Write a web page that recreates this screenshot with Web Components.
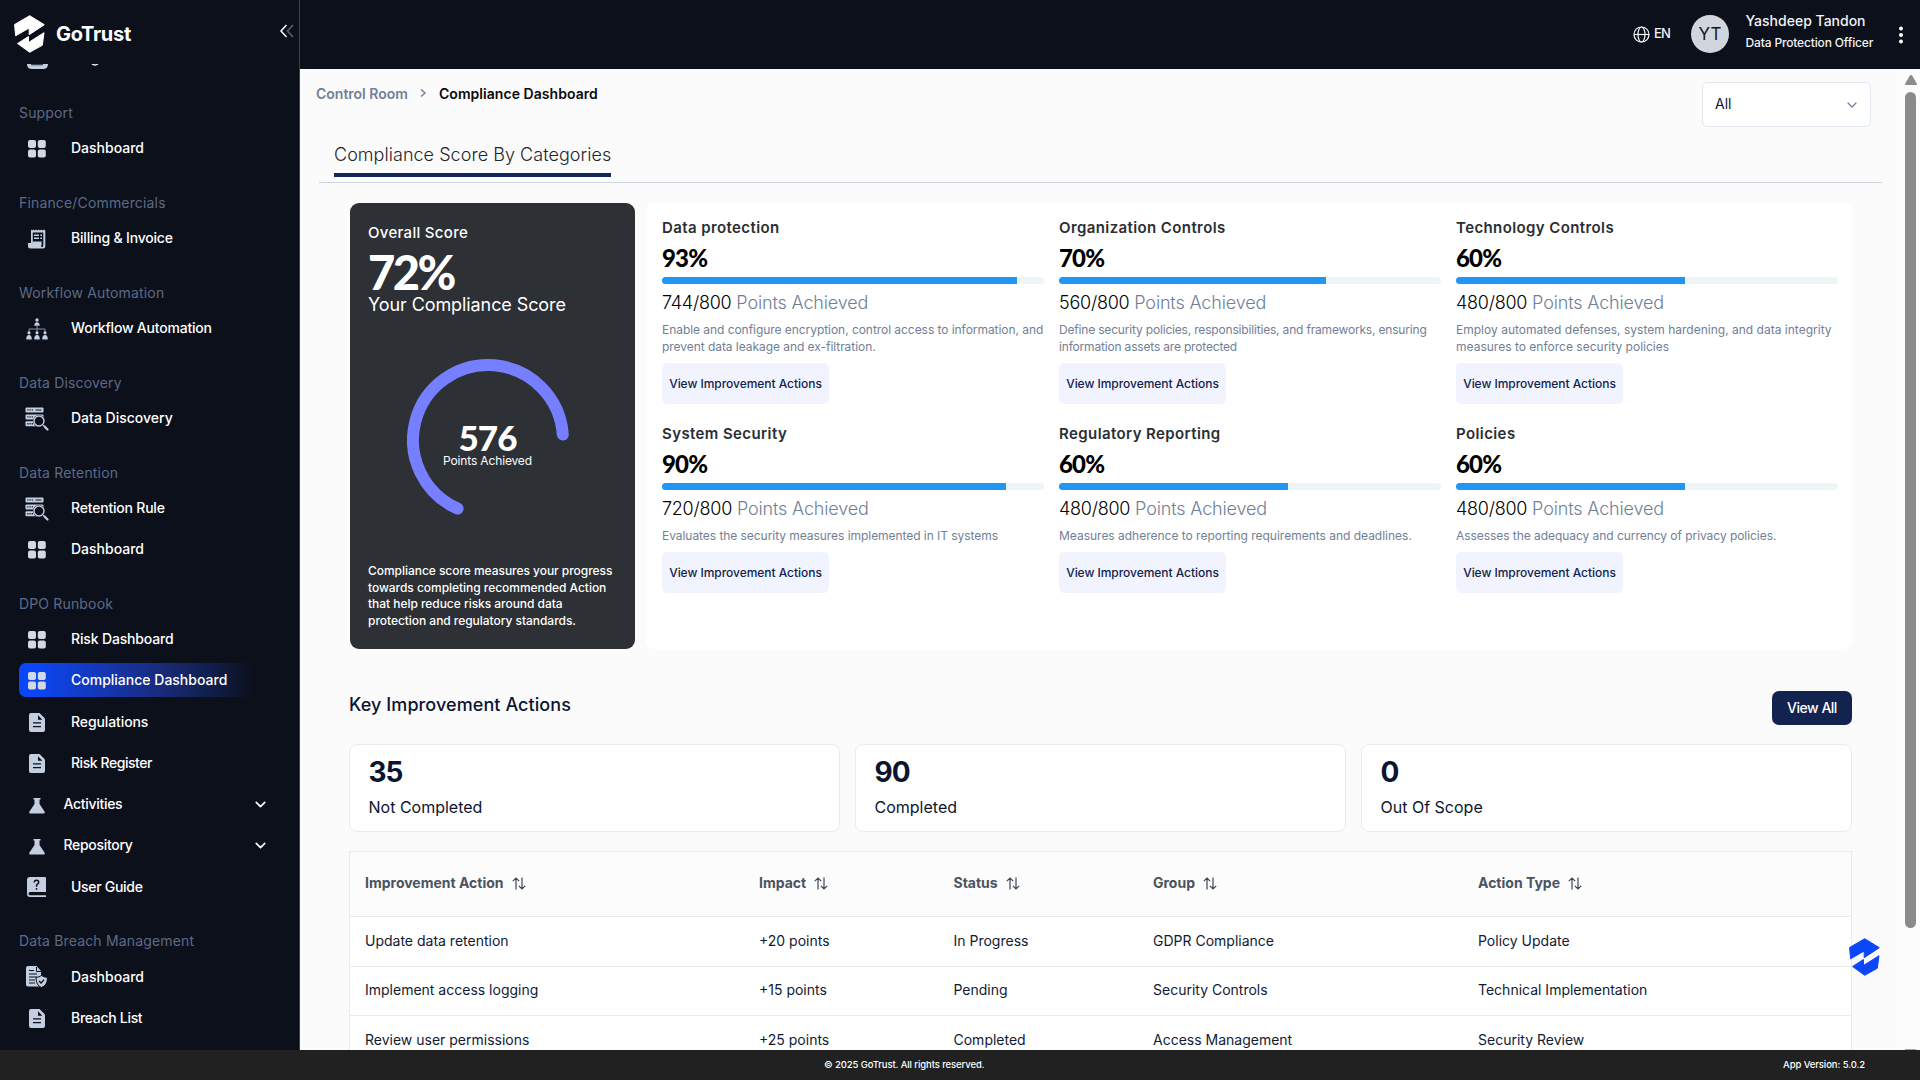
<!DOCTYPE html>
<html lang="en">
<head>
<meta charset="utf-8">
<title>GoTrust - Compliance Dashboard</title>
<style>
    html, body {
        margin: 0;
        height: 100%;
        overflow: hidden;
    }
    body {
        font-family: Inter, "Open Sans", sans-serif;
        font-size: 14px;
        color: #0f172a;
        --navy: #0c101b;
        --blue: #0b47f9;
        --line: #ebebeb;
        --muted: #718096;
    }
</style>
</head>
<body>
<app-shell>
    <side-bar slot="side">
        <nav-group label="Support">
            <nav-item icon="grid">Dashboard</nav-item>
        </nav-group>
        <nav-group label="Finance/Commercials">
            <nav-item icon="invoice" style="letter-spacing:-.2px">Billing &amp; Invoice</nav-item>
        </nav-group>
        <nav-group label="Workflow Automation">
            <nav-item icon="flow" style="letter-spacing:-.2px">Workflow Automation</nav-item>
        </nav-group>
        <nav-group label="Data Discovery">
            <nav-item icon="search">Data Discovery</nav-item>
        </nav-group>
        <nav-group label="Data Retention">
            <nav-item icon="search" style="letter-spacing:-.2px">Retention Rule</nav-item>
            <nav-item icon="grid">Dashboard</nav-item>
        </nav-group>
        <nav-group label="DPO Runbook">
            <nav-item icon="grid" style="letter-spacing:-.15px">Risk Dashboard</nav-item>
            <nav-item icon="grid" active>Compliance Dashboard</nav-item>
            <nav-item icon="doc" style="letter-spacing:-.1px">Regulations</nav-item>
            <nav-item icon="doc" style="letter-spacing:-.45px">Risk Register</nav-item>
            <nav-item icon="flask" expandable style="letter-spacing:-.3px">Activities</nav-item>
            <nav-item icon="flask" expandable style="letter-spacing:-.3px">Repository</nav-item>
            <nav-item icon="guide" style="letter-spacing:-.3px">User Guide</nav-item>
        </nav-group>
        <nav-group label="Data Breach Management">
            <nav-item icon="shield">Dashboard</nav-item>
            <nav-item icon="doc" style="letter-spacing:-.3px">Breach List</nav-item>
        </nav-group>
    </side-bar>
    <top-bar slot="top" name="Yashdeep Tandon" role-name="Data Protection Officer" initials="YT" lang-code="EN"></top-bar>

    <page-head></page-head>
    <section-tab>Compliance Score By Categories</section-tab>
    <score-board>
        <overall-score slot="overall"></overall-score>
        <score-item name="Data protection" percent="93" points="744">Enable and configure encryption, control access to information, and prevent data leakage and ex-filtration.</score-item>
        <score-item name="Organization Controls" percent="70" points="560" style="--desc-spacing:-.18px">Define security policies, responsibilities, and frameworks, ensuring information assets are protected</score-item>
        <score-item name="Technology Controls" percent="60" points="480" style="--desc-spacing:.01px">Employ automated defenses, system hardening, and data integrity measures to enforce security policies</score-item>
        <score-item name="System Security" percent="90" points="720">Evaluates the security measures implemented in IT systems</score-item>
        <score-item name="Regulatory Reporting" percent="60" points="480" style="--desc-spacing:-.01px">Measures adherence to reporting requirements and deadlines.</score-item>
        <score-item name="Policies" percent="60" points="480">Assesses the adequacy and currency of privacy policies.</score-item>
    </score-board>
    <key-actions>
        <stat-card value="35">Not Completed</stat-card>
        <stat-card value="90">Completed</stat-card>
        <stat-card value="0">Out Of Scope</stat-card>
    </key-actions>
    <action-table></action-table>

    <page-scrollbar slot="scroll"></page-scrollbar>
    <brand-mark slot="float"></brand-mark>
    <page-footer slot="footer"></page-footer>
</app-shell>

<script>
const ICONS = {
    grid: `<svg width="18" height="18" viewBox="0 0 18 18" fill="#d3d9e3"><rect width="8" height="8" rx="2"/><rect x="9.8" width="8" height="8" rx="2"/><rect y="9.6" width="8" height="8" rx="2"/><rect x="9.8" y="9.6" width="8" height="8" rx="2"/></svg>`,
    invoice: `<svg width="18" height="20" viewBox="0 0 18 20"><path fill="#c3cfe1" d="M3 .5l1.2 1 1.3-1 1.3 1 1.3-1 1.3 1 1.3-1 1.3 1 1.3-1 1.3 1 1.4-1 1.3 1V17q0 2.5-2.5 2.5H2.5Q0 19.500 0 17v-3h3z"/><path fill="#0c101b" d="M4.800 3.500h10.500V16.500q0 1.500-1.200 1.500T13 16.500V14H4.800z"/><g fill="#c3cfe1"><path d="M6 5.500h5V7H6zM6 8.500h5V10H6zM12.300 5.500H14V7h-1.700zM12.300 8.500H14V10h-1.700z"/><path d="M4.800 12.500h8.800v4H4.800z"/></g></svg>`,
    flow: `<svg width="22" height="22" viewBox="0 0 22 22" fill="#c3cfe1"><circle cx="11" cy="2" r="1.700"/><path d="M8.300 7.800q0-3.600 2.700-3.600t2.700 3.600z"/><path fill="none" stroke="#8792a8" stroke-width="1" d="M11 8v6M3 14v-3h16v3"/><circle cx="3" cy="14.800" r="1.600"/><circle cx="11" cy="14.800" r="1.600"/><circle cx="19" cy="14.800" r="1.600"/><path d="M.3 21.500q-.3-4.500 2.700-4.500t2.700 4.500zM8.300 21.500Q8 17 11 17t2.700 4.500zM16.300 21.500Q16 17 19 17t2.700 4.500z"/></svg>`,
    search: `<svg width="24" height="24" viewBox="0 0 24 24"><g fill="#c3cfe1"><rect x=".5" y=".5" width="18" height="5" rx="1"/><rect x=".5" y="7.500" width="18" height="5" rx="1"/><rect x=".5" y="14.300" width="13" height="5" rx="1"/></g><g fill="#0c101b"><path d="M2.300 2.300h1.200v1.300H2.300zM4.500 2.300h1.200v1.300H4.500zM6.700 2.300h1.200v1.300H6.700zM10.500 2.500h6v.9h-6zM2.300 9.300h1.200v1.300H2.300zM4.500 9.300h1.200v1.300H4.500zM6.700 9.300h1.200v1.300H6.700zM2.300 16.100h1.200v1.300H2.300zM4.500 16.100h1.200v1.300H4.500zM6.700 16.100h1.200v1.300H6.700z"/></g><circle cx="14" cy="14" r="6" fill="#0c101b"/><circle cx="14" cy="14" r="5" fill="#0c101b" stroke="#c3cfe1" stroke-width="1.400"/><path stroke="#c3cfe1" stroke-width="2.200" stroke-linecap="round" d="M19.500 19.500l3 3"/><path stroke="#c3cfe1" stroke-width="1" d="M17.500 17.500l2 2"/></svg>`,
    doc: `<svg width="16" height="19" viewBox="0 0 16 19"><path fill="#c3cfe1" d="M2 0h8.500L16 5.500V17q0 2-2 2H2q-2 0-2-2V2q0-2 2-2z"/><path fill="#0c101b" d="M9 2.300V6.700h4.400zM4 9.300h8v1.300H4zM4 13h8v1.300H4z"/></svg>`,
    flask: `<svg style="margin-top:2px" width="16" height="16" viewBox="0 0 16 16" fill="#c3cfe1"><path d="M4.500 0h7v1.500h-1V6l5 7.500q1 2-1 2H1.500q-2 0-1-2L5.500 6V1.500h-1z"/></svg>`,
    guide: `<svg width="20" height="21" viewBox="0 0 20 21"><path fill="#c3cfe1" d="M3 0h15q1 0 1 1v14H3q-1.500 0-1.500 1.600T3 18.200h16V20H3q-3 0-3-3V3q0-3 3-3z"/><path fill="none" stroke="#0c101b" stroke-width="1.500" d="M7.300 5.500Q7.300 3.300 9.500 3.300t2.200 2q0 1.300-1.200 1.900T9.500 9v.8M9.500 11v1.700"/></svg>`,
    shield: `<svg width="22" height="22" viewBox="0 0 22 22"><path fill="#c3cfe1" d="M2 0h8.500L15 5v15.500H2q-2 0-2-2V2q0-2 2-2z"/><path fill="none" stroke="#0c101b" d="M10.500 1v4.500H15M3 4.500h5M3 8h8M3 11h8M3 14h6M3 17h6"/><path fill="#c3cfe1" stroke="#0c101b" d="M15.500 9.500q2.500 1.700 6 2 0 8-6 10-5.500-2-5.500-10 3-.3 5.500-2z"/><path fill="none" stroke="#0c101b" stroke-width="1.300" d="M13 15l2 2 3-3.200"/></svg>`
};
const chevron = (size, width) => `<svg width="${size}" height="${size}" viewBox="0 0 24 24" fill="none" stroke="currentColor" stroke-width="${width}" stroke-linecap="round" stroke-linejoin="round"><path d="M6 9l6 6 6-6"/></svg>`;

class BaseElement extends HTMLElement {
    constructor() {
        super();
        this.attachShadow({ mode: "open" });
    }
    connectedCallback() {
        const template = document.createElement("template");
        template.innerHTML = `<style>${this.getStyle()}</style>${this.getTemplate()}`;
        this.shadowRoot.appendChild(template.content);
    }
}

class AppShell extends BaseElement {
    getStyle() {
        return `
            :host { display: grid; grid-template: 69px 1fr 30px / 300px 1fr; width: 100vw; height: 100vh; position: relative; }
            .side { grid-row: 1 / 3; overflow: hidden; }
            .body { display: flex; overflow: hidden; background: #fbfbfb; }
            main { flex: 1; display: flex; flex-direction: column; min-width: 0; }
            .foot { grid-column: 1 / 3; z-index: 1; }
            .float { position: absolute; left: 1848.500px; top: 937.500px; color: var(--blue); }
        `;
    }
    getTemplate() {
        return `
            <div class="side"><slot name="side"></slot></div>
            <slot name="top"></slot>
            <div class="body">
                <main><slot></slot></main>
                <slot name="scroll"></slot>
            </div>
            <div class="foot"><slot name="footer"></slot></div>
            <div class="float"><slot name="float"></slot></div>
        `;
    }
}

class BrandMark extends BaseElement {
    getStyle() {
        return `:host { display: block; width: 31px; height: 38px; } svg { display: block; }`;
    }
    getTemplate() {
        return `<svg width="31" height="38" viewBox="0 0 31 38" fill="currentColor" stroke="currentColor" stroke-width="1" stroke-linejoin="round">
            <path d="M15.700.7L30.300 9.700 15.200 19.700V13L1.600 20.800.6 9.500z"/>
            <path d="M30 17.700L28.300 30.300 15.700 37.300 3.600 28.500 14.500 21.500V27.500z"/></svg>`;
    }
}

class SideBar extends BaseElement {
    getStyle() {
        return `
            :host { display: flex; flex-direction: column; height: 100%; box-sizing: border-box; background: var(--navy); border-right: 1px solid #3b4150; color: #fff; }
            header { display: flex; align-items: center; height: 64px; flex: none; padding: 0 5px 0 14px; box-sizing: border-box; }
            brand-mark { margin-top: 4px; }
            b { font-size: 20px; font-weight: 700; margin-left: 11px; letter-spacing: -.3px; margin-top: 3px; }
            .collapse { margin: -2px 0 0 auto; }
            nav { flex: 1; overflow: hidden; }
            .rest { display: block; height: 10px; margin-bottom: 28.600px; }
        `;
    }
    getTemplate() {
        return `
            <header>
                <brand-mark></brand-mark><b>GoTrust</b>
                <svg class="collapse" width="15" height="16" viewBox="0 0 15 16" fill="none" stroke-width="1.500"><path stroke="#fff" d="M7.500 2L2 8l5.500 6"/><path stroke="#5d6373" d="M14 2L8.500 8l5.500 6"/></svg>
            </header>
            <nav>
                <svg class="rest" width="120" height="10"><path fill="#c3cfe1" d="M27 0h21q0 5-5 5H32q-5 0-5-5z"/><path fill="#3d4454" d="M31 0h12v1.300H31z"/><path fill="none" stroke="#fff" stroke-width="1.300" d="M92 0q3 2 6 0"/></svg>
                <slot></slot>
            </nav>
        `;
    }
}

class NavGroup extends BaseElement {
    getStyle() {
        return `
            :host { display: flex; flex-direction: column; margin: 0 0 28px 19px; }
            .label { height: 20px; line-height: 20px; color: #5c6a86; letter-spacing: .16px; margin-bottom: 8px; }
            .items { display: flex; flex-direction: column; gap: 7.250px; }
        `;
    }
    getTemplate() {
        return `<div class="label">${this.getAttribute("label")}</div><div class="items"><slot></slot></div>`;
    }
}

class NavItem extends BaseElement {
    getStyle() {
        return `
            :host { display: flex; align-items: center; height: 34px; width: 240px; border-radius: 7px; font-weight: 500; color: #fff; }
            :host([active]) { background: linear-gradient(90deg, #0b47f9 5%, #1a2a78 60%, #10204f 78%, rgba(12,16,27,0) 98%); }
            .icon { width: 37px; display: flex; justify-content: center; margin: 2px 15.500px 0 -.500px; }
            :host([expandable]) .icon { margin-right: 8px; }
            .arrow { margin: 1px -10px 0 auto; display: flex; }
            .text { margin-top: -.500px; }
        `;
    }
    getTemplate() {
        const arrow = this.hasAttribute("expandable") ? `<span class="arrow">${chevron(17, 2.300)}</span>` : "";
        return `<span class="icon">${ICONS[this.getAttribute("icon")]}</span><span class="text"><slot></slot></span>${arrow}`;
    }
}

class TopBar extends BaseElement {
    getStyle() {
        return `
            :host { display: flex; align-items: center; justify-content: flex-end; background: var(--navy); color: #f1f3f6; box-sizing: border-box; padding-right: 16px; font-weight: 500; }
            .lang { display: flex; align-items: center; gap: 4px; margin: -3px 21px 0 0; font-size: 13px; font-weight: 500; letter-spacing: -.8px; }
            .lang svg { margin-top: 2px; }
            .avatar { width: 38px; height: 38px; border-radius: 50%; background: #d1d6dd; color: #14171f; font-size: 17px; font-weight: 400; display: flex; align-items: center; justify-content: center; margin-right: 16.500px; margin-top: -1px; }
            .user { width: 127px; white-space: nowrap; margin-right: 25.500px; margin-top: -6px; }
            .name { line-height: 22px; }
            .role { font-size: 12px; line-height: 21px; letter-spacing: -.15px; }
        `;
    }
    getTemplate() {
        return `
            <div class="lang">
                <svg width="17" height="17" viewBox="0 0 17 17" fill="none" stroke="currentColor" stroke-width="1.200"><circle cx="8.500" cy="8.500" r="7.500"/><ellipse cx="8.500" cy="8.500" rx="3.500" ry="7.500"/><path d="M1 8.500h15"/></svg>
                ${this.getAttribute("lang-code")}
            </div>
            <div class="avatar">${this.getAttribute("initials")}</div>
            <div class="user">
                <div class="name">${this.getAttribute("name")}</div>
                <div class="role">${this.getAttribute("role-name")}</div>
            </div>
            <svg width="6" height="18" viewBox="0 0 6 18" fill="#fff"><circle cx="3" cy="2.500" r="2"/><circle cx="3" cy="9" r="2"/><circle cx="3" cy="15.500" r="2"/></svg>
        `;
    }
}

class PageHead extends BaseElement {
    getStyle() {
        return `
            :host { display: flex; justify-content: space-between; align-items: flex-start; padding: 13px 30px 0 16px; height: 58px; box-sizing: border-box; }
            .crumbs { display: flex; align-items: center; font-weight: 600; height: 22px; color: var(--muted); }
            .crumbs svg { margin: 0 12px 0 11px; }
            .crumbs strong { color: #0a0a0a; font-weight: 600; letter-spacing: .05px; }
            .select { display: flex; align-items: center; justify-content: space-between; width: 169px; height: 45px; box-sizing: border-box; border: 1px solid #e2e8f0; border-radius: 5px; background: #fff; padding: 0 10px 0 12px; }
            .select span { margin-top: -2px; }
            .select svg { color: #718096; }
        `;
    }
    getTemplate() {
        return `
            <div class="crumbs">Control Room
                <svg width="8" height="10" viewBox="0 0 8 10" fill="none" stroke="#718096" stroke-width="1.400"><path d="M2 1.500L6 5 2 8.500"/></svg>
                <strong>Compliance Dashboard</strong>
            </div>
            <div class="select"><span>All</span>${chevron(16, 1.800)}</div>
        `;
    }
}

class SectionTab extends BaseElement {
    getStyle() {
        return `
            :host { display: flex; margin: 8px 19px 0 19px; padding: 0 15px 5px; border-bottom: 1px solid #cdd5df; height: 42px; }
            span { font-size: 18px; font-weight: 300; color: #22262d; border-bottom: 4px solid #13275a; height: 38px; line-height: 39px; box-sizing: content-box; letter-spacing: .04px; }
        `;
    }
    getTemplate() {
        return `<span><slot></slot></span>`;
    }
}

class ScoreBoard extends BaseElement {
    getStyle() {
        return `
            :host { display: flex; gap: 11px; margin: 20px 49px 0 50px; height: 446px; flex: none; }
            .grid { flex: 1; background: #fff; border-radius: 8px; display: grid; grid-template-columns: repeat(3, 382px); grid-template-rows: 206px 206px; column-gap: 15px; padding: 14px 14px 0 16px; }
        `;
    }
    getTemplate() {
        return `<slot name="overall"></slot><div class="grid"><slot></slot></div>`;
    }
}

class OverallScore extends BaseElement {
    getStyle() {
        return `
            :host { display: flex; flex-direction: column; width: 285px; box-sizing: border-box; background: #2d3035; border-radius: 9px; color: #fff; padding: 19px 18px; }
            .title { font-size: 15px; font-weight: 500; line-height: 22px; letter-spacing: .3px; }
            .percent { font-family: Lato, sans-serif; font-size: 47px; font-weight: 900; line-height: 46px; letter-spacing: -2.500px; margin-top: 5px; }
            .caption { font-size: 18px; line-height: 24px; margin-top: -2px; letter-spacing: -.09px; }
            .ring { display: grid; place-items: center; width: 162px; height: 162px; margin: 42px 0 0 38.500px; }
            .ring > * { grid-area: 1 / 1; }
            .ring div.score { text-align: center; padding-top: 12px; }
            .points { font-family: Lato, sans-serif; font-size: 35px; font-weight: 900; line-height: 30px; letter-spacing: -1px; }
            .ring p { margin: 0; font-size: 12px; line-height: 18px; letter-spacing: -.15px; }
            .about { margin: 42px -10px 0 0; font-size: 12px; font-weight: 500; line-height: 16.700px; letter-spacing: -.04px; }
        `;
    }
    getTemplate() {
        return `
            <div class="title">Overall Score</div>
            <div class="percent">72%</div>
            <div class="caption">Your Compliance Score</div>
            <div class="ring">
                <svg width="162" height="162" viewBox="-81 -81 162 162" fill="none" stroke="#767fff" stroke-width="12" stroke-linecap="round"><path d="M-30.400 68.600A75 75 0 1 1 74.800-5.500"/></svg>
                <div class="score"><div class="points">576</div><p>Points Achieved</p></div>
            </div>
            <div class="about">Compliance score measures your progress<br>towards completing recommended Action<br>that help reduce risks around data<br>protection and regulatory standards.</div>
        `;
    }
}

class ScoreItem extends BaseElement {
    getStyle() {
        return `
            :host { display: block; }
            h3 { margin: 0; font-size: 15px; font-weight: 600; line-height: 22px; letter-spacing: .4px; color: #2a2e33; }
            .percent { font-family: Lato, sans-serif; font-size: 24px; font-weight: 900; line-height: 28px; letter-spacing: -.8px; color: #000; margin: 5px 0; }
            .track { height: 7px; border-radius: 4px; background: #eff4f7; overflow: hidden; }
            .bar { height: 100%; background: #2196f3; width: ${this.getAttribute("percent")}%; }
            .points { font-size: 18px; font-weight: 300; line-height: 24px; margin-top: 7px; color: var(--muted); letter-spacing: -.15px; }
            .points span { color: #000; letter-spacing: -.25px; }
            p { margin: 6px -6px 0 0; font-size: 12px; line-height: 17px; color: var(--muted); letter-spacing: var(--desc-spacing, -.05px); }
            button { display: block; margin: 8px 0 0; width: 167px; height: 41px; border: 0; border-radius: 5px; background: #f1f4ff; color: #12224e; font: 500 12px Inter, sans-serif; letter-spacing: -.04px; padding: 0 0 1px; white-space: nowrap; }
        `;
    }
    getTemplate() {
        return `
            <h3>${this.getAttribute("name")}</h3>
            <div class="percent">${this.getAttribute("percent")}%</div>
            <div class="track"><div class="bar"></div></div>
            <div class="points"><span>${this.getAttribute("points")}/800</span> Points Achieved</div>
            <p><slot></slot></p>
            <button>View Improvement Actions</button>
        `;
    }
}

class KeyActions extends BaseElement {
    getStyle() {
        return `
            :host { display: block; margin: 42px 49px 0 49px; flex: none; }
            header { display: flex; justify-content: space-between; height: 34px; }
            h2 { margin: 0; font-size: 18px; font-weight: 500; line-height: 27px; letter-spacing: .08px; color: #0c1530; }
            button { width: 80px; height: 34px; border: 0; border-radius: 7px; background: #13234f; color: #fff; font: 500 14px Inter, sans-serif; letter-spacing: -.5px; padding: 0 0 2px; }
            .cards { display: grid; grid-template-columns: repeat(3, 1fr); gap: 15px; margin-top: 19px; }
        `;
    }
    getTemplate() {
        return `
            <header><h2>Key Improvement Actions</h2><button>View All</button></header>
            <div class="cards"><slot></slot></div>
        `;
    }
}

class StatCard extends BaseElement {
    getStyle() {
        return `
            :host { display: block; box-sizing: border-box; height: 88px; border: 1px solid var(--line); border-radius: 8px; background: #fff; padding: 10px 18.500px; color: #0c1530; }
            .value { font-size: 28px; font-weight: 700; line-height: 34px; letter-spacing: -1px; }
            .label { font-size: 16px; line-height: 24px; margin-top: 6px; }
        `;
    }
    getTemplate() {
        return `<div class="value">${this.getAttribute("value")}</div><div class="label"><slot></slot></div>`;
    }
}

class ActionTable extends BaseElement {
    getStyle() {
        return `
            :host { display: block; margin: 19px 49px 0; border: 1px solid var(--line); flex: none; }
            .row { display: grid; grid-template-columns: 394px 194.500px 199.500px 325px 1fr; align-items: center; height: 48.500px; border-bottom: 1px solid var(--line); padding-left: 15px; background: #fff; color: #111b33; }
            .row span { margin-top: -2px; }
            .row.head { height: 64px; background: #fcfcfc; font-weight: 700; color: #4a5362; }
            .row.head span { display: flex; align-items: center; gap: 8px; margin-top: -4px; }
            svg { margin-top: 3px; }
        `;
    }
    getTemplate() {
        const sort = `<svg width="14" height="13" viewBox="0 0 14 13" fill="none" stroke="#3d4757" stroke-width="1.200"><path d="M4 12.500V1.200M.8 4.200L4 1l3.200 3.200M10 .5v11.300M6.800 8.800L10 12l3.200-3.200"/></svg>`;
        const heads = ["Improvement Action", "Impact", "Status", "Group", "Action Type"];
        const rows = [
            ["Update data retention", "+20 points", "In Progress", "GDPR Compliance", "Policy Update"],
            ["Implement access logging", "+15 points", "Pending", "Security Controls", "Technical Implementation"],
            ["Review user permissions", "+25 points", "Completed", "Access Management", "Security Review"]
        ];
        return `
            <div class="row head">${heads.map(h => `<span>${h}${sort}</span>`).join("")}</div>
            ${rows.map(r => `<div class="row">${r.map(c => `<span>${c}</span>`).join("")}</div>`).join("")}
        `;
    }
}

class PageScrollbar extends BaseElement {
    getStyle() {
        return `
            :host { display: flex; flex-direction: column; align-items: center; width: 19px; background: #fcfcfc; flex: none; }
            svg { display: block; margin-top: 6px; flex: none; }
            .thumb { width: 11px; height: 836px; border-radius: 6px; background: #8b8b8b; margin-top: 7px; flex: none; }
            .down { width: 11px; height: 1px; background: #a5a5a5; margin-top: auto; }
        `;
    }
    getTemplate() {
        return `<svg width="12" height="10" viewBox="0 0 12 10" fill="#8b8b8b"><path d="M6 0q.8 0 1.300.8L12 9q0 1-1 1H1Q0 10 0 9L4.700.8Q5.200 0 6 0z"/></svg><div class="thumb"></div><div class="down"></div>`;
    }
}

class PageFooter extends BaseElement {
    getStyle() {
        return `
            :host { display: grid; grid-template-columns: 824px 1fr auto; align-items: center; height: 30px; box-sizing: border-box; background: #212121; color: #fff; font-size: 9.500px; font-weight: 500; padding: 0 55px 2px 0; letter-spacing: -.1px; }
        `;
    }
    getTemplate() {
        return `<span></span><span>© 2025 GoTrust. All rights reserved.</span><span>App Version: 5.0.2</span>`;
    }
}

customElements.define("brand-mark", BrandMark);
customElements.define("app-shell", AppShell);
customElements.define("side-bar", SideBar);
customElements.define("nav-group", NavGroup);
customElements.define("nav-item", NavItem);
customElements.define("top-bar", TopBar);
customElements.define("page-head", PageHead);
customElements.define("section-tab", SectionTab);
customElements.define("score-board", ScoreBoard);
customElements.define("overall-score", OverallScore);
customElements.define("score-item", ScoreItem);
customElements.define("key-actions", KeyActions);
customElements.define("stat-card", StatCard);
customElements.define("action-table", ActionTable);
customElements.define("page-scrollbar", PageScrollbar);
customElements.define("page-footer", PageFooter);
</script>
</body>
</html>
